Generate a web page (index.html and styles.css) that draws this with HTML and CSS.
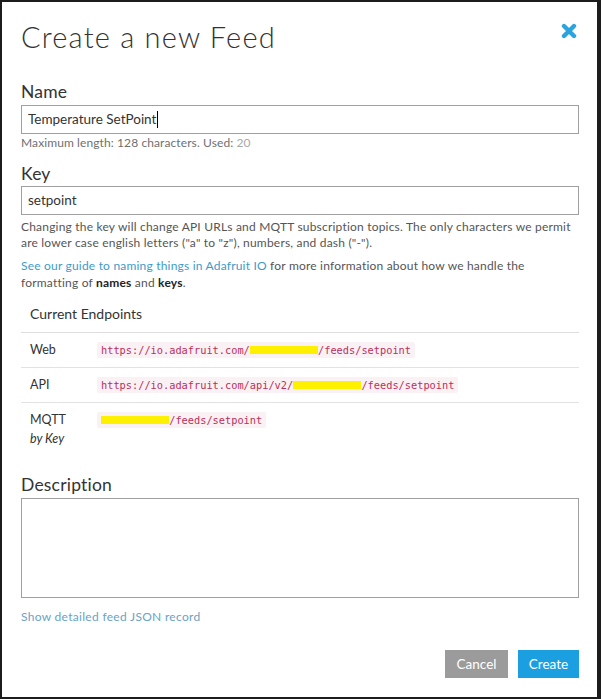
FILE: index.html
```html
<!DOCTYPE html>
<html>
<head>
<meta charset="utf-8">
<link rel="stylesheet" href="styles.css">
</head>
<body>
<div class="modal">
  <div class="header">
    <h1 class="title">Create a new Feed</h1>
    <button class="close" aria-label="Close">
      <svg width="16" height="16" viewBox="0 0 16 16"><path d="M3 3 L13 13 M13 3 L3 13" stroke="#2ba3dd" stroke-width="4.4" stroke-linecap="round"/></svg>
    </button>
  </div>

  <div class="field name-field">
    <div class="label">Name</div>
    <div class="input">Temperature SetPoint<span class="caret"></span></div>
    <div class="counter">Maximum length: 128 characters. Used: <span class="used">20</span></div>
  </div>

  <div class="field key-field">
    <div class="label">Key</div>
    <div class="input">setpoint</div>
    <p class="hint">Changing the key will change API URLs and MQTT subscription topics. The only characters we permit are lower case english letters ("a" to "z"), numbers, and dash ("-").</p>
    <p class="hint guide"><a class="link">See our guide to naming things in Adafruit IO</a> for more information about how we handle the formatting of <b>names</b> and <b>keys</b>.</p>
  </div>

  <table class="endpoints">
    <thead>
      <tr><th colspan="2">Current Endpoints</th></tr>
    </thead>
    <tbody>
      <tr><td class="k">Web</td><td><code>https://io.adafruit.com/<span class="redact">xxxxxxxxxxx</span>/feeds/setpoint</code></td></tr>
      <tr><td class="k">API</td><td><code>https://io.adafruit.com/api/v2/<span class="redact">xxxxxxxxxxx</span>/feeds/setpoint</code></td></tr>
      <tr><td class="k">MQTT<br><em>by Key</em></td><td><code><span class="redact">xxxxxxxxxxx</span>/feeds/setpoint</code></td></tr>
    </tbody>
  </table>

  <div class="field desc-field">
    <div class="label">Description</div>
    <div class="textarea"></div>
  </div>

  <a class="json-link">Show detailed feed JSON record</a>

  <div class="footer">
    <button class="btn cancel">Cancel</button>
    <button class="btn create">Create</button>
  </div>
</div>
</body>
</html>
```

FILE: styles.css
```css
html, body {
  margin: 0;
  padding: 0;
}
body {
  background: #1c1c1c;
  width: 601px;
  height: 699px;
  overflow: hidden;
  font-family: Lato, "Open Sans", sans-serif;
  color: #333;
}
.modal {
  margin: 2px 0 0 2px;
  width: 595px;
  height: 695px;
  box-sizing: border-box;
  background: #fff;
  padding: 0 18px 0 19px;
  display: flex;
  flex-direction: column;
}
.header {
  display: flex;
  justify-content: space-between;
  align-items: flex-start;
  padding-top: 18px;
}
.title {
  margin: 0;
  font-size: 29px;
  line-height: 34px;
  font-weight: 300;
  color: #333;
  letter-spacing: 1.2px;
}
.close {
  border: 0;
  background: transparent;
  padding: 0;
  margin: 3px 2px 0 0;
  width: 16px;
  height: 16px;
  display: block;
}
.close svg { display: block; }

.label {
  font-size: 17.5px;
  line-height: 20px;
  color: #333;
  letter-spacing: 0.2px;
  margin-bottom: 3px;
}
.name-field { margin-top: 28px; }
.key-field { margin-top: 13px; }
.desc-field { margin-top: 20px; }

.input {
  height: 29px;
  box-sizing: border-box;
  border: 1px solid #a0a0a0;
  font-size: 13.5px;
  line-height: 27px;
  padding: 0 6px;
  color: #333;
  display: flex;
  align-items: center;
}
.caret {
  display: inline-block;
  width: 1px;
  height: 17px;
  background: #000;
  margin-left: 1px;
}
.key-field .label { margin-bottom: 2px; }
.counter {
  margin-top: 1px;
  font-size: 12px;
  line-height: 16px;
  letter-spacing: 0.1px;
  color: #707070;
}
.used { color: #a8a8a8; }
.hint {
  margin: 4px 0 0;
  font-size: 12px;
  line-height: 16px;
  letter-spacing: 0.2px;
  color: #555;
}
.hint.guide {
  margin-top: 6px;
  line-height: 17px;
}
.hint b { color: #222; font-weight: 700; }
.link { color: #3e9acb; }

.endpoints {
  margin-top: 5px;
  width: 100%;
  border-collapse: collapse;
  font-size: 12.5px;
  color: #333;
}
.endpoints th {
  text-align: left;
  font-weight: 400;
  font-size: 14px;
  padding: 8px 9px;
  line-height: 20px;
  border-bottom: 1px solid #dedede;
}
.endpoints td {
  padding: 7px 9px;
  line-height: 19px;
  vertical-align: top;
}
.endpoints tbody tr:not(:last-child) td {
  border-bottom: 1px solid #e2e2e2;
}
.endpoints td.k { width: 58px; padding-right: 0; }
.endpoints em { font-style: italic; }
code {
  font-family: "DejaVu Sans Mono", "Liberation Mono", monospace;
  font-size: 10.3px;
  color: #b9305c;
  background: #f9f1f4;
  padding: 2px 4px;
  border-radius: 2px;
}
.redact {
  color: #fff000;
  background: linear-gradient(to bottom, transparent 2px, #fff000 2px, #fff000 10px, transparent 10px);
}

.textarea {
  height: 100px;
  box-sizing: border-box;
  border: 1px solid #a0a0a0;
}
.json-link {
  margin-top: 11px;
  font-size: 12px;
  line-height: 16px;
  letter-spacing: 0.3px;
  color: #6aa2c6;
}
.footer {
  margin-top: 25px;
  display: flex;
  justify-content: flex-end;
  gap: 10px;
}
.btn {
  border: 0;
  height: 28px;
  padding: 0;
  font-family: Lato, "Open Sans", sans-serif;
  font-size: 13.5px;
  color: #fff;
  cursor: pointer;
}
.cancel { background: #9b9b9b; width: 63px; }
.create { background: #1b9fe0; width: 61px; }
```
